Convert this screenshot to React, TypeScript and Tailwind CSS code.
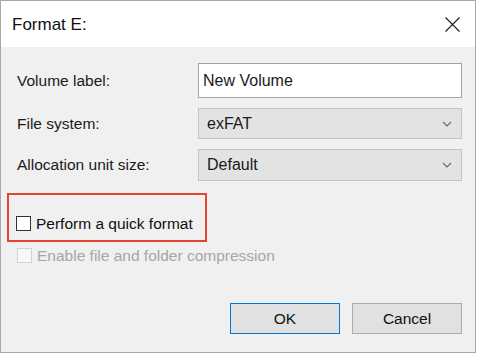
import React from 'react';

const Chevron: React.FC = () => (
  <svg width="10" height="6" viewBox="0 0 10 6" className="shrink-0">
    <path d="M1 1 L5 5 L9 1" fill="none" stroke="#6b6b6b" strokeWidth="1.2" />
  </svg>
);

const FormatDialog: React.FC = () => {
  return (
    <div className="w-[477px] h-[354px] bg-white" style={{ fontFamily: '"Liberation Sans", Arial, sans-serif' }}>
      <div className="w-[476px] h-[353px] border border-[#a9a9a9] bg-[#f0f0f0] flex flex-col">
        {/* title bar */}
        <div className="h-[46px] bg-white flex items-center justify-between pl-[11px] pr-[15px] shrink-0">
          <span className="text-[17px] text-[#111] leading-none">Format E:</span>
          <svg width="15" height="15" viewBox="0 0 15 15">
            <path d="M0.5 0.5 L14.5 14.5 M14.5 0.5 L0.5 14.5" stroke="#1a1a1a" strokeWidth="1.1" />
          </svg>
        </div>

        {/* fields */}
        <div className="flex flex-col pt-[16px] pl-[16px] text-[15.5px] text-[#1a1a1a]">
          <div className="flex items-center h-[35px]">
            <span className="w-[181px]">Volume label:</span>
            <div className="w-[264px] h-[35px] bg-white border border-[#a3a3a3] flex items-center pl-[4px] text-[16px]">
              New Volume
            </div>
          </div>
          <div className="flex items-center h-[31px] mt-[10px]">
            <span className="w-[181px]">File system:</span>
            <div className="w-[264px] h-[31px] bg-[#e3e3e3] border border-[#c4c4c4] flex items-center justify-between pl-[8px] pr-[9px] text-[16px]">
              <span>exFAT</span>
              <Chevron />
            </div>
          </div>
          <div className="flex items-center h-[32px] mt-[10px]">
            <span className="w-[181px]">Allocation unit size:</span>
            <div className="w-[264px] h-[32px] bg-[#e3e3e3] border border-[#c4c4c4] flex items-center justify-between pl-[8px] pr-[9px] text-[16px]">
              <span>Default</span>
              <Chevron />
            </div>
          </div>
        </div>

        {/* options */}
        <div className="mt-[12px] ml-[6px] w-[200px] h-[49px] border-2 border-[#e8432c] flex items-end pb-[9px] pl-[7px] text-[15.5px] text-[#111]">
          <div className="flex items-center gap-[5px]">
            <div className="w-[15px] h-[15px] bg-white border border-[#333]" />
            <span className="leading-none">Perform a quick format</span>
          </div>
        </div>
        <div className="mt-[6px] pl-[16px] flex items-center gap-[5px] text-[15.5px] text-[#a6a6a6]">
          <div className="w-[15px] h-[15px] bg-[#f7f7f7] border border-[#d2d2d2]" />
          <span className="leading-none">Enable file and folder compression</span>
        </div>

        {/* buttons */}
        <div className="mt-auto mb-[18px] pr-[13px] flex justify-end gap-[12px] text-[15.5px] text-[#111]">
          <button className="w-[110px] h-[31px] bg-[#e1e1e1] border border-[#0078d7]">OK</button>
          <button className="w-[110px] h-[31px] bg-[#e1e1e1] border border-[#adadad]">Cancel</button>
        </div>
      </div>
    </div>
  );
};

export default function App() {
  return <FormatDialog />;
}
